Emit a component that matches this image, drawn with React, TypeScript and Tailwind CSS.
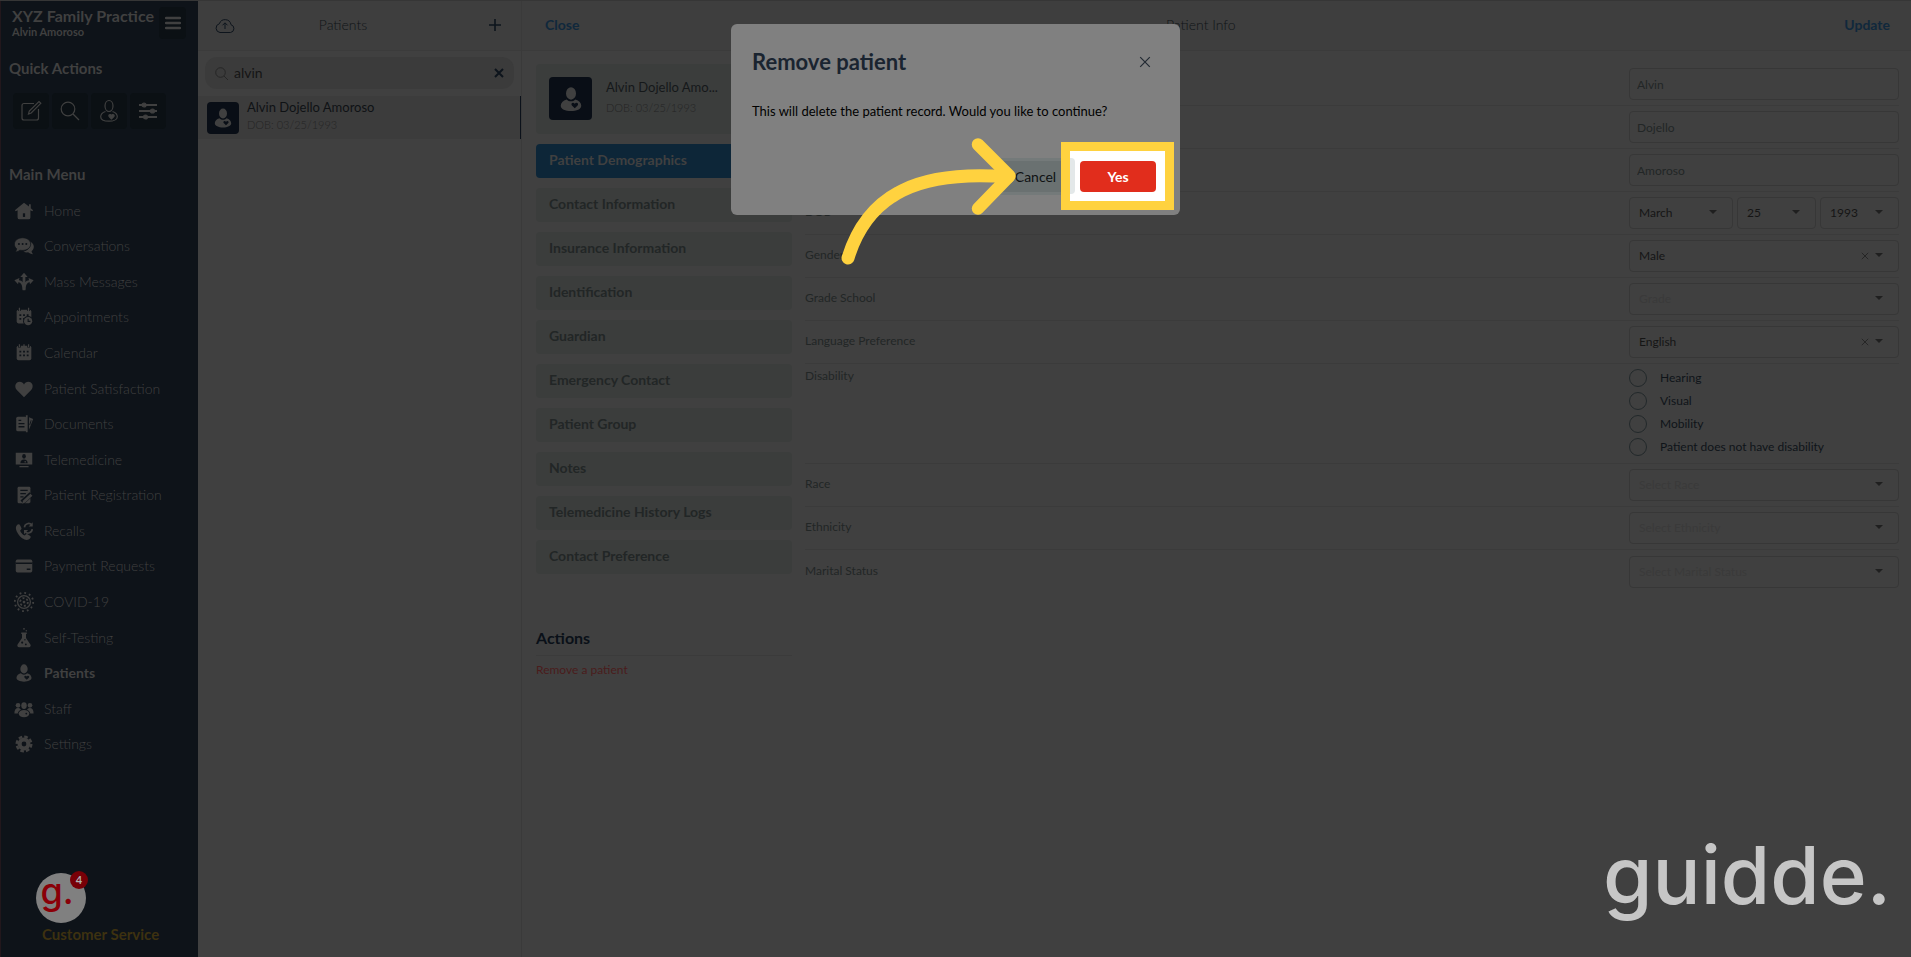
import React from 'react';

const CUT = '#0e1319';

// Nav icons share a 24x24 box, CUT is the sidebar colour used for the cut-outs
const icons: Record<string, React.ReactNode> = {
    home: (
        <>
            <path d="M12 3 2 11.2l1 1.2 2-1.3V19a2 2 0 0 0 2 2h10a2 2 0 0 0 2-2v-7.9l2 1.3 1-1.2-2.6-2.2V4.6h-2v2.6z" />
            <path d="M10.8 14.5h2.4v4h-2.4z" fill={CUT} />
        </>
    ),
    chat: (
        <>
            <path d="M18.5 7.2c2.6 1.3 4.2 3.2 4.2 5.6 0 2-.9 3.600-2.500 4.800.2 1.300.8 2.200 1.600 3.300-2.300 0-4-.8-5.200-2-2 .2-4-.1-5.300-.7 4.500-.6 8.600-4.500 7.200-11z" />
            <path d="M10.500 3C5.500 3 1.500 6 1.500 10c0 2 .9 3.700 2.500 5-.2 1.500-.8 2.400-1.700 3.500 2.200 0 4-.8 5.200-1.900 6 1.200 11.800-1.800 11.800-6.600C19.300 6 15.500 3 10.500 3z" stroke={CUT} strokeWidth=".8" />
            <circle cx="6.500" cy="9.800" r="1.100" fill={CUT} />
            <circle cx="10.500" cy="9.800" r="1.100" fill={CUT} />
            <circle cx="14.500" cy="9.800" r="1.100" fill={CUT} />
        </>
    ),
    mass: (
        <>
            <path d="M12 2 8 6.500h2.500V21h3V6.500H16z" />
            <path d="M10.500 21c0-5-1.500-8-4.500-9l-.5 2.500L1.500 10 7 7.500 6.500 10c3.500.5 5.500 2.500 5.500 6zM13.500 21c0-5 1.500-8 4.500-9l.5 2.500 4-4.500L17 7.500l.5 2.500c-3.500.5-5.500 2.500-5.500 6z" />
        </>
    ),
    appointments: (
        <>
            <rect x="4" y="4" width="16" height="15" rx="2" />
            <path d="M7 2.500v3M17 2.500v3" stroke={CUT} strokeWidth="3" />
            <path d="M7 2v3.500M17 2v3.500" stroke="currentColor" strokeWidth="1.400" />
            <path d="M7 9h2v2H7zm4 0h2v2h-2zm4 0h2v2h-2zm-8 4h2v2H7zm4 0h2v2h-2z" fill={CUT} />
            <circle cx="16.500" cy="16.500" r="5.500" fill={CUT} />
            <circle cx="16.500" cy="16.500" r="4.500" />
            <path d="M16.500 13.800v3h2.500" stroke={CUT} strokeWidth="1.200" fill="none" />
        </>
    ),
    calendar: (
        <>
            <rect x="4" y="4" width="16" height="16" rx="2" />
            <path d="M7 2.500v3.500M17 2.500v3.500" stroke={CUT} strokeWidth="3" />
            <path d="M7 2.500v3M12 2.500v3M17 2.500v3" stroke="currentColor" strokeWidth="1.400" />
            <path d="M7 9.500h2v2H7zm4 0h2v2h-2zm4 0h2v2h-2zm-8 4h2v2H7zm4 0h2v2h-2zm4 0h2v2h-2z" fill={CUT} />
        </>
    ),
    heart: <path d="M12 21 4.200 13C.8 9.200 3 4 7.200 4c2.200 0 3.800 1.100 4.800 3 1-1.900 2.600-3 4.800-3C21 4 23.200 9.200 19.800 13z" />,
    documents: (
        <>
            <rect x="3.500" y="4" width="11.500" height="16" rx="1.800" />
            <path d="M14 2.500h2V21h-2zM17.500 4.500 22 6.500 17.500 18z" />
            <path d="M19.800 8 18.300 13" stroke={CUT} />
            <path d="M6 8h3M6 11.500h6.500M6 15h6.500" stroke={CUT} strokeWidth="1.400" />
        </>
    ),
    telemedicine: (
        <>
            <path d="M3 4h18v13H3zM7 18.500h10V20H7z" />
            <ellipse cx="12" cy="8" rx="2" ry="2.600" fill={CUT} />
            <path d="M8 15.500c0-2.500 1.500-4 4-4s4 1.500 4 4z" fill={CUT} />
            <circle cx="13.300" cy="14" r=".9" />
        </>
    ),
    registration: (
        <>
            <path d="M6.500 3h11A1.500 1.500 0 0 1 19 4.500V20l-1.500 1h-11A1.500 1.500 0 0 1 5 19.500v-15A1.500 1.500 0 0 1 6.500 3z" />
            <path d="M8 7h8M8 10.500h6M8 14h3.500" stroke={CUT} strokeWidth="1.500" />
            <path d="m10 20 10-9" stroke={CUT} strokeWidth="5.500" />
            <path d="M10 21.500 11 18l8-7.500 2.200 2.200-7.700 7.500z" />
        </>
    ),
    recalls: (
        <>
            <path d="M4 6c1.500-1.800 3-1.600 4 .3l1.200 2.500c.5 1.200-.8 2-1.400 2.900 1 2.500 2.400 4 5 5.200 1-.9 1.800-2 3-1.300l2.600 1.500c1.200.8 1.200 1.700.3 2.800C15.500 24 9 20.500 5.500 15 3 11 2.400 8 4 6z" />
            <path d="M12.500 8a4.500 4.500 0 0 1 8-2.500M21 10a4.500 4.500 0 0 1-8 2.500" stroke="currentColor" strokeWidth="1.800" fill="none" />
            <path d="M21.500 2.500V7H17zM12 15.500V11h4.500z" />
        </>
    ),
    payment: (
        <>
            <rect x="3" y="5" width="18" height="14" rx="1.800" />
            <path d="M3 9h18M15 15.500h4" stroke={CUT} strokeWidth="1.500" />
        </>
    ),
    covid: (
        <>
            <circle cx="12" cy="12" r="7" fill="none" stroke="currentColor" strokeWidth="1.400" />
            <circle cx="12" cy="12" r="10" fill="none" stroke="currentColor" strokeWidth="2" strokeDasharray="2 3.236" />
            <circle cx="12" cy="12" r="1.500" />
            <circle cx="12" cy="12" r="4.200" fill="none" stroke="currentColor" strokeWidth="2" strokeDasharray="2.200 2.198" />
        </>
    ),
    testing: (
        <>
            <path d="M9 6h6v1.500h-.8V12l4.800 7c.8 1.400 0 3-1.600 3H6.600C5 22 4.200 20.400 5 19l4.800-7V7.500H9z" />
            <circle cx="12" cy="2" r="1" />
            <circle cx="14.500" cy="4" r=".8" />
            <circle cx="10" cy="17" r="1.200" fill={CUT} />
            <circle cx="14" cy="19" r="1" fill={CUT} />
            <circle cx="13" cy="14" r=".8" fill={CUT} />
        </>
    ),
    patient: <PersonShape heart={CUT} />,
    staff: (
        <>
            <circle cx="5.500" cy="8" r="2.600" />
            <circle cx="18.500" cy="8" r="2.600" />
            <path d="M1.500 17c0-4 1.800-6 4-6s4 2 4 6zM14.500 17c0-4 1.800-6 4-6s4 2 4 6z" />
            <ellipse cx="12" cy="8.500" rx="3.800" ry="4.500" fill={CUT} />
            <ellipse cx="12" cy="8.300" rx="3" ry="3.800" />
            <ellipse cx="12" cy="17" rx="6.800" ry="4.800" fill={CUT} />
            <ellipse cx="12" cy="17" rx="5.800" ry="4" />
            <circle cx="14.500" cy="17" r="1" fill={CUT} />
        </>
    ),
    settings: (
        <>
            <circle cx="12" cy="12" r="7" />
            <circle cx="12" cy="12" r="8" fill="none" stroke="currentColor" strokeWidth="2.600" strokeDasharray="4 2.283" />
            <circle cx="12" cy="12" r="2.600" fill={CUT} />
        </>
    ),
};

const menu = [
    { label: 'Home', icon: 'home' },
    { label: 'Conversations', icon: 'chat' },
    { label: 'Mass Messages', icon: 'mass' },
    { label: 'Appointments', icon: 'appointments' },
    { label: 'Calendar', icon: 'calendar' },
    { label: 'Patient Satisfaction', icon: 'heart' },
    { label: 'Documents', icon: 'documents' },
    { label: 'Telemedicine', icon: 'telemedicine' },
    { label: 'Patient Registration', icon: 'registration' },
    { label: 'Recalls', icon: 'recalls' },
    { label: 'Payment Requests', icon: 'payment' },
    { label: 'COVID-19', icon: 'covid' },
    { label: 'Self-Testing', icon: 'testing' },
    { label: 'Patients', icon: 'patient', active: true },
    { label: 'Staff', icon: 'staff' },
    { label: 'Settings', icon: 'settings' },
];

const sections = [
    'Patient Demographics',
    'Contact Information',
    'Insurance Information',
    'Identification',
    'Guardian',
    'Emergency Contact',
    'Patient Group',
    'Notes',
    'Telemedicine History Logs',
    'Contact Preference',
];

const disabilities = ['Hearing', 'Visual', 'Mobility', 'Patient does not have disability'];

function PersonShape({ heart }: { heart: string }) {
    return (
        <>
            <ellipse cx="12" cy="7.500" rx="4" ry="5" />
            <path d="M8.500 12.300c1 1 2.200 1.500 3.500 1.500s2.500-.5 3.500-1.500c3 .8 4.700 2.900 4.700 5 0 2.700-3.700 4.200-8.200 4.200s-8.200-1.500-8.200-4.200c0-2.100 1.700-4.200 4.700-5z" />
            <path d="m15 19.300-2.300-2.200c-1.200-1.500.9-3 2.300-1.400 1.400-1.600 3.500-.1 2.300 1.400z" fill={heart} />
        </>
    );
}

function QuickIcon({ name }: { name: string }) {
    return (
        <svg className="w-6 h-6" viewBox="0 0 24 24" fill="none" stroke="currentColor" strokeWidth="1.200">
            {name === 'Compose' && (
                <>
                    <path d="M15 4.500H5a2 2 0 0 0-2 2V19a2 2 0 0 0 2 2h12.500a2 2 0 0 0 2-2v-9" />
                    <path d="m9.500 15 .8-3L20 2.500l1.800 1.800-9.600 9.700z" />
                </>
            )}
            {name === 'Search' && (
                <>
                    <circle cx="10" cy="10" r="6.800" />
                    <path d="m15 15 6 6" />
                </>
            )}
            {name === 'Patient' && (
                <>
                    <ellipse cx="12" cy="7" rx="4" ry="5.500" />
                    <path d="M8.500 12.500c-3 1-4.800 3-4.800 5.200 0 3 4 4.500 8.300 4.500s8.300-1.500 8.300-4.500c0-2.200-1.800-4.200-4.800-5.200" />
                    <path d="m14.500 20-2.300-2.300c-1.200-1.500.9-3 2.300-1.400 1.400-1.600 3.500-.1 2.300 1.400z" fill="currentColor" />
                </>
            )}
            {name === 'Filters' && (
                <>
                    <path d="M3 6h18M3 12h18M3 18h18" strokeWidth="1.800" />
                    <circle cx="8" cy="6" r="2" fill="currentColor" />
                    <circle cx="16.500" cy="12" r="2" fill="currentColor" />
                    <circle cx="9.500" cy="18" r="2" fill="currentColor" />
                </>
            )}
        </svg>
    );
}

function Cross({ className }: { className: string }) {
    return (
        <svg className={className} viewBox="0 0 10 10" fill="none" stroke="currentColor">
            <path d="m1 1 8 8M9 1 1 9" />
        </svg>
    );
}

function Avatar({ className, icon }: { className: string; icon: string }) {
    return (
        <div className={`${className} shrink-0 flex items-center justify-center rounded bg-[#090e16] text-[#404040]`}>
            <svg className={icon} viewBox="0 0 24 24" fill="currentColor">
                <PersonShape heart="#090e16" />
            </svg>
        </div>
    );
}

interface FieldProps {
    id: string;
    value: string;
    placeholder?: boolean;
    clearable?: boolean;
    className?: string;
}

function SelectBox({ id, value, placeholder, clearable, className = '' }: FieldProps) {
    return (
        <div className={`relative ${className}`}>
            <select
                id={id}
                aria-label={id}
                className={`block w-full h-8 pl-[9px] appearance-none rounded border border-[#373737] bg-transparent text-xs ${
                    placeholder ? 'text-[#3a3a3a]' : 'text-[#151515]'
                }`}
            >
                <option>{value}</option>
            </select>
            {clearable && (
                <button type="button" aria-label={`Clear ${id}`} className="absolute right-[30px] top-3 text-[#202020]">
                    <Cross className="w-2 h-2" />
                </button>
            )}
            <svg className="absolute right-4 top-[13px] w-2 h-1 pointer-events-none" viewBox="0 0 8 4" fill="#1f1f1f">
                <path d="M0 0h8L4 4z" />
            </svg>
        </div>
    );
}

function Row({ label, htmlFor, last, children }: { label: string; htmlFor: string; last?: boolean; children: React.ReactNode }) {
    return (
        <div className={`h-[43px] flex items-center justify-between ${last ? '' : 'border-b border-[#3b3b3b]'}`}>
            <label htmlFor={htmlFor} className="pb-0.5 text-xs text-[#222626]">{label}</label>
            <div className="w-[270px]">{children}</div>
        </div>
    );
}

function TextBox({ id, value }: { id: string; value: string }) {
    return (
        <input
            id={id}
            defaultValue={value}
            className="block w-full h-8 px-[7px] rounded-sm border border-[#373737] bg-transparent text-xs text-[#222626]"
        />
    );
}

function Sidebar() {
    return (
        <aside className="w-[198px] shrink-0 flex flex-col border-l border-[#22171c] bg-[#0e1319] text-[#404040]">
            <div className="flex justify-between pl-[11px] pr-[12px] pt-1.5">
                <div>
                    <h1 className="text-base leading-[18px] font-bold whitespace-nowrap">XYZ Family Practice</h1>
                    <p className="text-[11px] leading-[14px] font-bold">Alvin Amoroso</p>
                </div>
                <button aria-label="Toggle menu" className="w-[27px] h-8 flex items-center justify-center rounded-sm bg-[#0b1014]">
                    <svg className="w-4 h-4" viewBox="0 0 16 16" stroke="currentColor" strokeWidth="2.400" strokeLinecap="round">
                        <path d="M1 3h14M1 8h14M1 13h14" />
                    </svg>
                </button>
            </div>

            <h2 className="mt-5 pl-2 text-[15px] leading-[18px] font-bold">Quick Actions</h2>
            <div className="mt-4 pl-3 flex gap-[3px]">
                {['Compose', 'Search', 'Patient', 'Filters'].map((name) => (
                    <button key={name} aria-label={name} className="w-9 h-9 flex items-center justify-center rounded bg-[#0b1014]">
                        <QuickIcon name={name} />
                    </button>
                ))}
            </div>

            <h2 className="mt-9 pl-2 text-[15px] leading-[18px] font-bold">Main Menu</h2>
            <nav className="mt-[10px] h-[569px] grid auto-rows-fr">
                {menu.map((item) => (
                    <a
                        key={item.label}
                        href="#"
                        className={`flex items-center gap-[9px] pl-3 text-sm leading-5 ${item.active ? 'font-bold' : 'font-light'}`}
                    >
                        <svg className="w-[22px] h-[22px]" viewBox="0 0 24 24" fill="currentColor">{icons[item.icon]}</svg>
                        {item.label}
                    </a>
                ))}
            </nav>

            <div className="mt-auto pb-[13px] pl-[35px]">
                <button aria-label="Open messages" className="relative block w-[50px] h-[50px] rounded-full bg-[#808080] text-[#8a0008]">
                    <span className="absolute inset-0 flex justify-center pr-2 font-[Inter,sans-serif] text-[36px] leading-9 font-medium">g.</span>
                    <span className="absolute -top-0.5 -right-0.5 w-[18px] h-[18px] rounded-full bg-[#780007] text-[#b0b0b0] text-[11px] leading-[18px] font-bold">4</span>
                </button>
                <p className="pt-px pl-1.5 text-[15px] leading-5 font-bold text-[#3d3110]">Customer Service</p>
            </div>
        </aside>
    );
}

function PatientList() {
    return (
        <section className="w-[324px] shrink-0 border-r border-[#3a3a3a]">
            <header className="h-[50px] flex items-center pl-[17px] pb-0.5 border-b border-[#3b3b3b] bg-[#3e3e3e]">
                <button aria-label="Upload" className="text-[#0d141c]">
                    <svg className="w-5 h-5" viewBox="0 0 20 20" fill="none" stroke="currentColor">
                        <path d="M5 17.500h10.500a4 4 0 0 0 .5-7.800 6 6 0 0 0-11.600-1A4.500 4.500 0 0 0 5 17.500zM10 14V8M7.500 10.300 10 7.800l2.500 2.500" />
                    </svg>
                </button>
                <h2 className="flex-1 text-center text-sm font-light text-[#101417]">Patients</h2>
                <button aria-label="Add patient" className="w-[70px] pr-5 flex justify-end text-[#0d141c]">
                    <svg className="w-3 h-3" viewBox="0 0 12 12" stroke="currentColor" strokeWidth="1.600">
                        <path d="M6 0v12M0 6h12" />
                    </svg>
                </button>
            </header>

            <div className="mx-[7px] mt-1.5 h-8 flex items-center gap-1.5 px-[10px] rounded-xl bg-[#3b3b3b]">
                <svg className="w-[13px] h-[13px] text-[#262626]" viewBox="0 0 13 13" fill="none" stroke="currentColor">
                    <circle cx="5.500" cy="5.500" r="4.800" />
                    <path d="m9 9 4 4" />
                </svg>
                <input aria-label="Search patients" defaultValue="alvin" className="flex-1 min-w-0 bg-transparent text-sm text-[#151515]" />
                <button aria-label="Clear search" className="text-[#0d141c]">
                    <Cross className="w-[10px] h-[10px] stroke-2" />
                </button>
            </div>

            <div className="mt-[7px] h-[43px] flex items-center gap-2 pl-[9px] border-r border-[#0b111a] bg-[#3c3c3c]">
                <Avatar className="w-8 h-8" icon="w-6 h-6" />
                <div className="pb-1">
                    <p className="text-[13px] leading-[18px] text-[#0f1215]">Alvin Dojello Amoroso</p>
                    <p className="text-[11px] leading-[18px] font-light text-[#242424]">DOB: 03/25/1993</p>
                </div>
            </div>
        </section>
    );
}

function PatientInfo() {
    return (
        <main className="flex-1 min-w-0">
            <header className="h-[50px] flex items-center pl-[23px] pr-[21px] pb-0.5 border-b border-[#3b3b3b] bg-[#3e3e3e]">
                <button className="text-sm font-bold text-[#10283c]">Close</button>
                <h2 className="flex-1 pr-[22px] text-center text-sm font-light text-[#101417]">Patient Info</h2>
                <button className="text-sm font-bold text-[#10283c]">Update</button>
            </header>

            <div className="flex gap-[13px] pl-[14px] pr-3">
                <div className="w-64 shrink-0 pt-[13px]">
                    <div className="h-[70px] flex gap-[14px] px-[13px] pt-[13px] rounded bg-[#3b3d3c]">
                        <Avatar className="w-[43px] h-[43px]" icon="w-[30px] h-[30px]" />
                        <div>
                            <p className="text-[13px] leading-5 text-[#15181a]">Alvin Dojello Amo...</p>
                            <p className="text-[11px] leading-[22px] font-light text-[#242424]">DOB: 03/25/1993</p>
                        </div>
                    </div>
                    <div className="mt-[10px] flex flex-col gap-[10px]">
                        {sections.map((section, index) => (
                            <button
                                key={section}
                                className={`h-[34px] px-[13px] pb-0.5 text-left text-sm font-bold rounded-sm ${
                                    index === 0 ? 'bg-[#0d2638] text-[#404040]' : 'bg-[#3b3d3c] text-[#222626]'
                                }`}
                            >
                                {section}
                            </button>
                        ))}
                    </div>
                    <h3 className="mt-[53px] pb-1.5 border-b border-[#3b3b3b] text-base leading-[22px] font-bold text-[#0a1018]">Actions</h3>
                    <button className="mt-1 text-xs leading-5 text-[#4a1c1c]">Remove a patient</button>
                </div>

                <form className="flex-1 min-w-0 pt-3">
                    <Row label="First Name" htmlFor="first-name"><TextBox id="first-name" value="Alvin" /></Row>
                    <Row label="Middle Name" htmlFor="middle-name"><TextBox id="middle-name" value="Dojello" /></Row>
                    <Row label="Last Name" htmlFor="last-name"><TextBox id="last-name" value="Amoroso" /></Row>
                    <Row label="DOB" htmlFor="month">
                        <div className="flex gap-1">
                            <SelectBox id="month" value="March" className="w-[104px]" />
                            <SelectBox id="day" value="25" className="flex-1" />
                            <SelectBox id="year" value="1993" className="flex-1" />
                        </div>
                    </Row>
                    <Row label="Gender" htmlFor="gender"><SelectBox id="gender" value="Male" clearable /></Row>
                    <Row label="Grade School" htmlFor="grade"><SelectBox id="grade" value="Grade" placeholder /></Row>
                    <Row label="Language Preference" htmlFor="language"><SelectBox id="language" value="English" clearable /></Row>

                    <fieldset className="h-[100px] flex justify-between border-b border-[#3b3b3b] text-xs text-[#222626]">
                        <span className="pt-1">Disability</span>
                        <div className="w-[270px] pt-0.5">
                            {disabilities.map((item) => (
                                <label key={item} className="h-[23px] flex items-center gap-[13px] text-[#0f1419]">
                                    <input type="radio" name="disability" className="w-[18px] h-[18px] appearance-none rounded-full border border-[#22282a]" />
                                    {item}
                                </label>
                            ))}
                        </div>
                    </fieldset>

                    <Row label="Race" htmlFor="race"><SelectBox id="race" value="Select Race" placeholder /></Row>
                    <Row label="Ethnicity" htmlFor="ethnicity"><SelectBox id="ethnicity" value="Select Ethnicity" placeholder /></Row>
                    <Row label="Marital Status" htmlFor="marital" last><SelectBox id="marital" value="Select Marital Status" placeholder /></Row>
                </form>
            </div>
        </main>
    );
}

function RemoveDialog() {
    return (
        <div className="fixed inset-0 flex items-start justify-center pt-6">
            <div role="dialog" aria-labelledby="dialog-title" className="relative w-[449px] px-[21px] pt-6 pb-[23px] rounded-md bg-[#808080]">
                <div className="flex items-center justify-between pr-2">
                    <h2 id="dialog-title" className="text-[22px] leading-7 font-bold text-[#1a2430]">Remove patient</h2>
                    <button aria-label="Close dialog" className="text-[#222a33]"><Cross className="w-3 h-3" /></button>
                </div>
                <p className="mt-6 text-[13px] leading-[22px] text-black">This will delete the patient record. Would you like to continue?</p>

                <div className="mt-[39px] flex justify-end gap-[5px] pr-[3px]">
                    <button className="w-[79px] h-[31px] rounded bg-[#6a7171] ring-3 ring-[#747a7a] text-sm text-[#0f1213]">Cancel</button>
                    <div className="relative">
                        {/* Highlight frame around the confirm button */}
                        <div className="absolute -left-[19px] -right-[18px] -top-[19px] -bottom-[18px] flex items-center border-9 border-[#ffd23f] bg-white">
                            <span className="w-[5px] h-9 rounded-r bg-[#e3e8e9]"></span>
                        </div>
                        <button className="relative block w-[76px] h-[31px] rounded bg-[#e12d1c] text-sm font-bold text-white">Yes</button>
                    </div>
                </div>

                <svg className="absolute left-[99px] top-[106px] w-[190px] h-[140px] pointer-events-none" viewBox="830 130 190 140" fill="none" stroke="#ffd23f" strokeLinecap="round" strokeLinejoin="round">
                    <path d="M848 258C868 193 920 170 1008 177" strokeWidth="13" />
                    <path d="m978 144.500 31.500 31.500-31.500 32.500" strokeWidth="12.500" />
                </svg>
            </div>
        </div>
    );
}

export default function App() {
    return (
        <div className="relative min-h-screen flex border-t border-[#363636] bg-[#404040] font-[Lato,sans-serif]">
            <Sidebar />
            <PatientList />
            <PatientInfo />
            <RemoveDialog />
            <div className="absolute right-5 bottom-[34px] font-[Inter,sans-serif] text-[80px] leading-[96px] font-medium text-[#c6c6c6]">guidde.</div>
        </div>
    );
}
